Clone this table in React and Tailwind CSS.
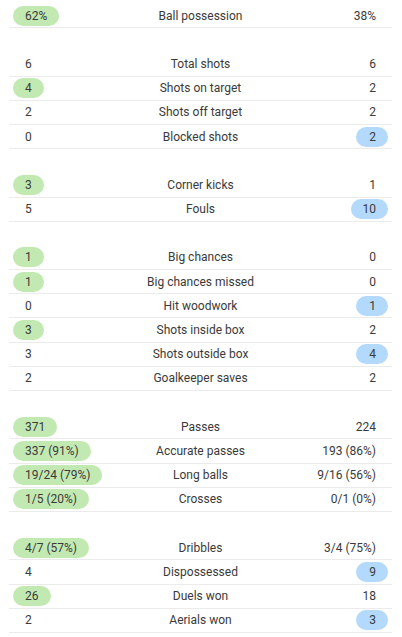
const groups = [
  [['62%', 'Ball possession', '38%', 'home']],
  [
    ['6', 'Total shots', '6', null],
    ['4', 'Shots on target', '2', 'home'],
    ['2', 'Shots off target', '2', null],
    ['0', 'Blocked shots', '2', 'away'],
  ],
  [
    ['3', 'Corner kicks', '1', 'home'],
    ['5', 'Fouls', '10', 'away'],
  ],
  [
    ['1', 'Big chances', '0', 'home'],
    ['1', 'Big chances missed', '0', 'home'],
    ['0', 'Hit woodwork', '1', 'away'],
    ['3', 'Shots inside box', '2', 'home'],
    ['3', 'Shots outside box', '4', 'away'],
    ['2', 'Goalkeeper saves', '2', null],
  ],
  [
    ['371', 'Passes', '224', 'home'],
    ['337 (91%)', 'Accurate passes', '193 (86%)', 'home'],
    ['19/24 (79%)', 'Long balls', '9/16 (56%)', 'home'],
    ['1/5 (20%)', 'Crosses', '0/1 (0%)', 'home'],
  ],
  [
    ['4/7 (57%)', 'Dribbles', '3/4 (75%)', 'home'],
    ['4', 'Dispossessed', '9', 'away'],
    ['26', 'Duels won', '18', 'home'],
    ['2', 'Aerials won', '3', 'away'],
  ],
];

// one stat line: home value, label, away value
function StatRow({ home, label, away, best }) {
  return (
    <div className="grid h-[24.2px] grid-cols-[1fr_auto_1fr] items-center border-b border-[#ebebeb] px-1">
      <div className="flex justify-start">
        <span
          className={`flex h-5 min-w-[30px] items-center rounded-full px-3 ${
            best === 'home' ? 'bg-[#c3e9b3]' : ''
          }`}
        >
          {home}
        </span>
      </div>
      <div className="text-center">{label}</div>
      <div className="flex justify-end">
        <span
          className={`flex h-5 min-w-[32px] items-center justify-end rounded-full px-3 ${
            best === 'away' ? 'bg-[#b3d9fc]' : ''
          }`}
        >
          {away}
        </span>
      </div>
    </div>
  );
}

export default function App() {
  return (
    <div
      className="min-h-[637px] bg-white pl-[9px] pr-[10px] pt-[4px] text-[12px] text-[#3a3a3a]"
      style={{ fontFamily: 'Roboto, "Liberation Sans", sans-serif' }}
    >
      {groups.map((rows, i) => (
        <div key={i} className={i > 0 ? 'mt-[24.2px]' : ''}>
          {rows.map(([home, label, away, best]) => (
            <StatRow key={label} home={home} label={label} away={away} best={best} />
          ))}
        </div>
      ))}
    </div>
  );
}
